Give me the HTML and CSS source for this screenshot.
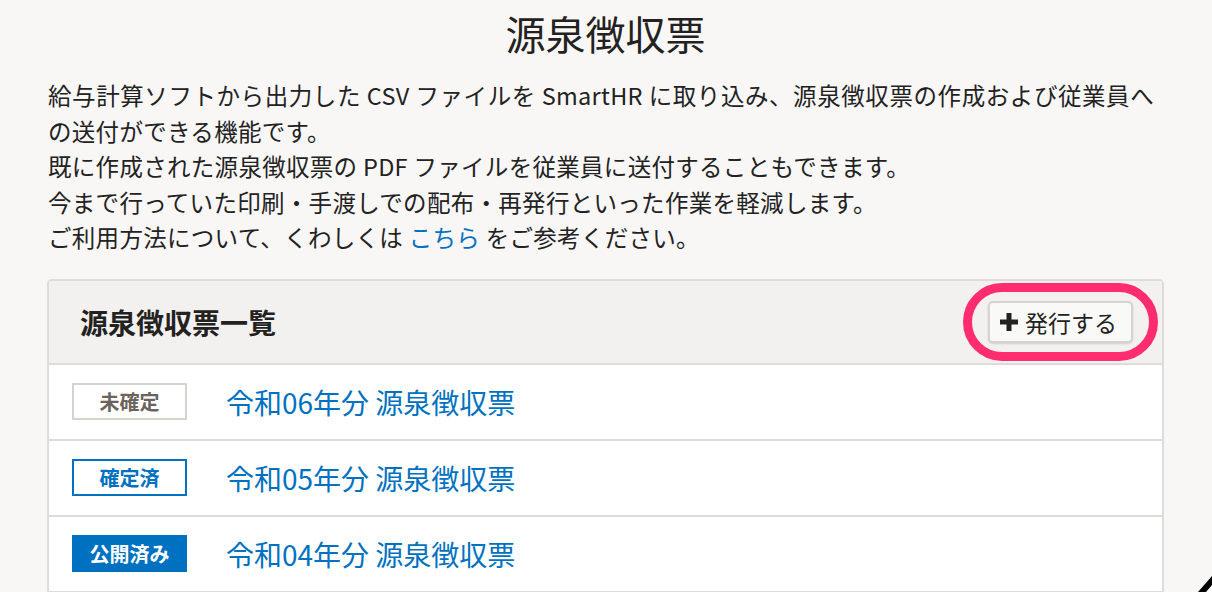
FILE: index.html
```html
<!DOCTYPE html>
<html lang="ja">
<head>
  <meta charset="UTF-8">
  <title>源泉徴収票</title>
  <link rel="stylesheet" href="styles.css">
</head>
<body>
  <div class="page">
    <h1>源泉徴収票</h1>
    <div class="intro">
      <p>給与計算ソフトから出力した CSV ファイルを SmartHR に取り込み、源泉徴収票の作成および従業員への送付ができる機能です。</p>
      <p>既に作成された源泉徴収票の PDF ファイルを従業員に送付することもできます。</p>
      <p>今まで行っていた印刷・手渡しでの配布・再発行といった作業を軽減します。</p>
      <p>ご利用方法について、くわしくは <a href="#">こちら</a> をご参考ください。</p>
    </div>

    <!-- List panel -->
    <div class="panel">
      <div class="panel-head">
        <h2>源泉徴収票一覧</h2>
        <div class="highlight">
          <button class="btn">
            <svg class="plus" width="18" height="18" viewBox="0 0 18 18"><path d="M9 0 V18 M0 9 H18" stroke="#23221f" stroke-width="5"/></svg>
            発行する
          </button>
        </div>
      </div>
      <ul class="list">
        <li class="row">
          <span class="badge draft">未確定</span>
          <a href="#">令和06年分 源泉徴収票</a>
        </li>
        <li class="row">
          <span class="badge fixed">確定済</span>
          <a href="#">令和05年分 源泉徴収票</a>
        </li>
        <li class="row">
          <span class="badge public">公開済み</span>
          <a href="#">令和04年分 源泉徴収票</a>
        </li>
      </ul>
    </div>
  </div>

  <svg class="grip" width="14" height="16" viewBox="0 0 14 16"><path d="M14 0 V16 H0 Z" fill="#000"/><path d="M14 9 V16 H8 Z" fill="#fff"/></svg>
</body>
</html>
```

FILE: styles.css
```css
/* General */
body {
  margin: 0;
  background-color: #f8f7f6;
  color: #23221f;
  font-family: 'Noto Sans CJK JP', 'Noto Sans', sans-serif;
  overflow: hidden;
}

.page {
  width: 1117px;
  margin-left: 47px;
}

h1 {
  margin: 7px 0 19px;
  font-size: 40px;
  font-weight: 400;
  line-height: 52px;
  text-align: center;
}

.intro {
  width: 1106px;
  padding-left: 1px;
  margin-bottom: 23px;
}

.intro p {
  margin: 0;
  font-size: 23.5px;
  line-height: 35.5px;
  letter-spacing: 0.3px;
  text-align: justify;
}

.intro a {
  color: #0071c1;
  text-decoration: none;
}

/* Panel */
.panel {
  background-color: #fff;
  border: 2px solid #dedcd9;
  border-radius: 5px 5px 0 0;
}

.panel-head {
  display: flex;
  align-items: center;
  justify-content: space-between;
  height: 82px;
  padding: 0 4px 0 31px;
  background-color: #f2f1ef;
  border-bottom: 2px solid #dedcd9;
}

.panel-head h2 {
  margin: 0;
  font-size: 28px;
  font-weight: 700;
}

.highlight {
  border: 9px solid #ff2d6f;
  border-radius: 40px;
  padding: 9px 16px;
}

.btn {
  display: flex;
  align-items: center;
  gap: 7px;
  box-sizing: border-box;
  width: 145px;
  height: 42px;
  padding: 0 0 0 10px;
  font-family: inherit;
  font-size: 23px;
  color: #23221f;
  background-color: #f9f9f8;
  border: 2px solid #d6d4d1;
  border-radius: 5px;
  box-shadow: 0 1px 2px rgba(0, 0, 0, 0.15);
}

/* Rows */
.list {
  margin: 0;
  padding: 0;
  list-style: none;
}

.row {
  display: flex;
  align-items: center;
  gap: 39px;
  height: 74px;
  padding-left: 23px;
  border-bottom: 2px solid #dedcd9;
}

.row a {
  font-size: 28px;
  color: #0071c1;
  text-decoration: none;
}

.badge {
  box-sizing: border-box;
  width: 115px;
  height: 37px;
  display: flex;
  align-items: center;
  justify-content: center;
  font-size: 20px;
  font-weight: 700;
}

.badge.draft {
  color: #6b645c;
  border: 2px solid #d6d3cf;
}

.badge.fixed {
  color: #0071c1;
  border: 2px solid #0071c1;
}

.badge.public {
  color: #fff;
  background-color: #0071c1;
}

.grip {
  position: fixed;
  right: 0;
  bottom: 0;
}
```
